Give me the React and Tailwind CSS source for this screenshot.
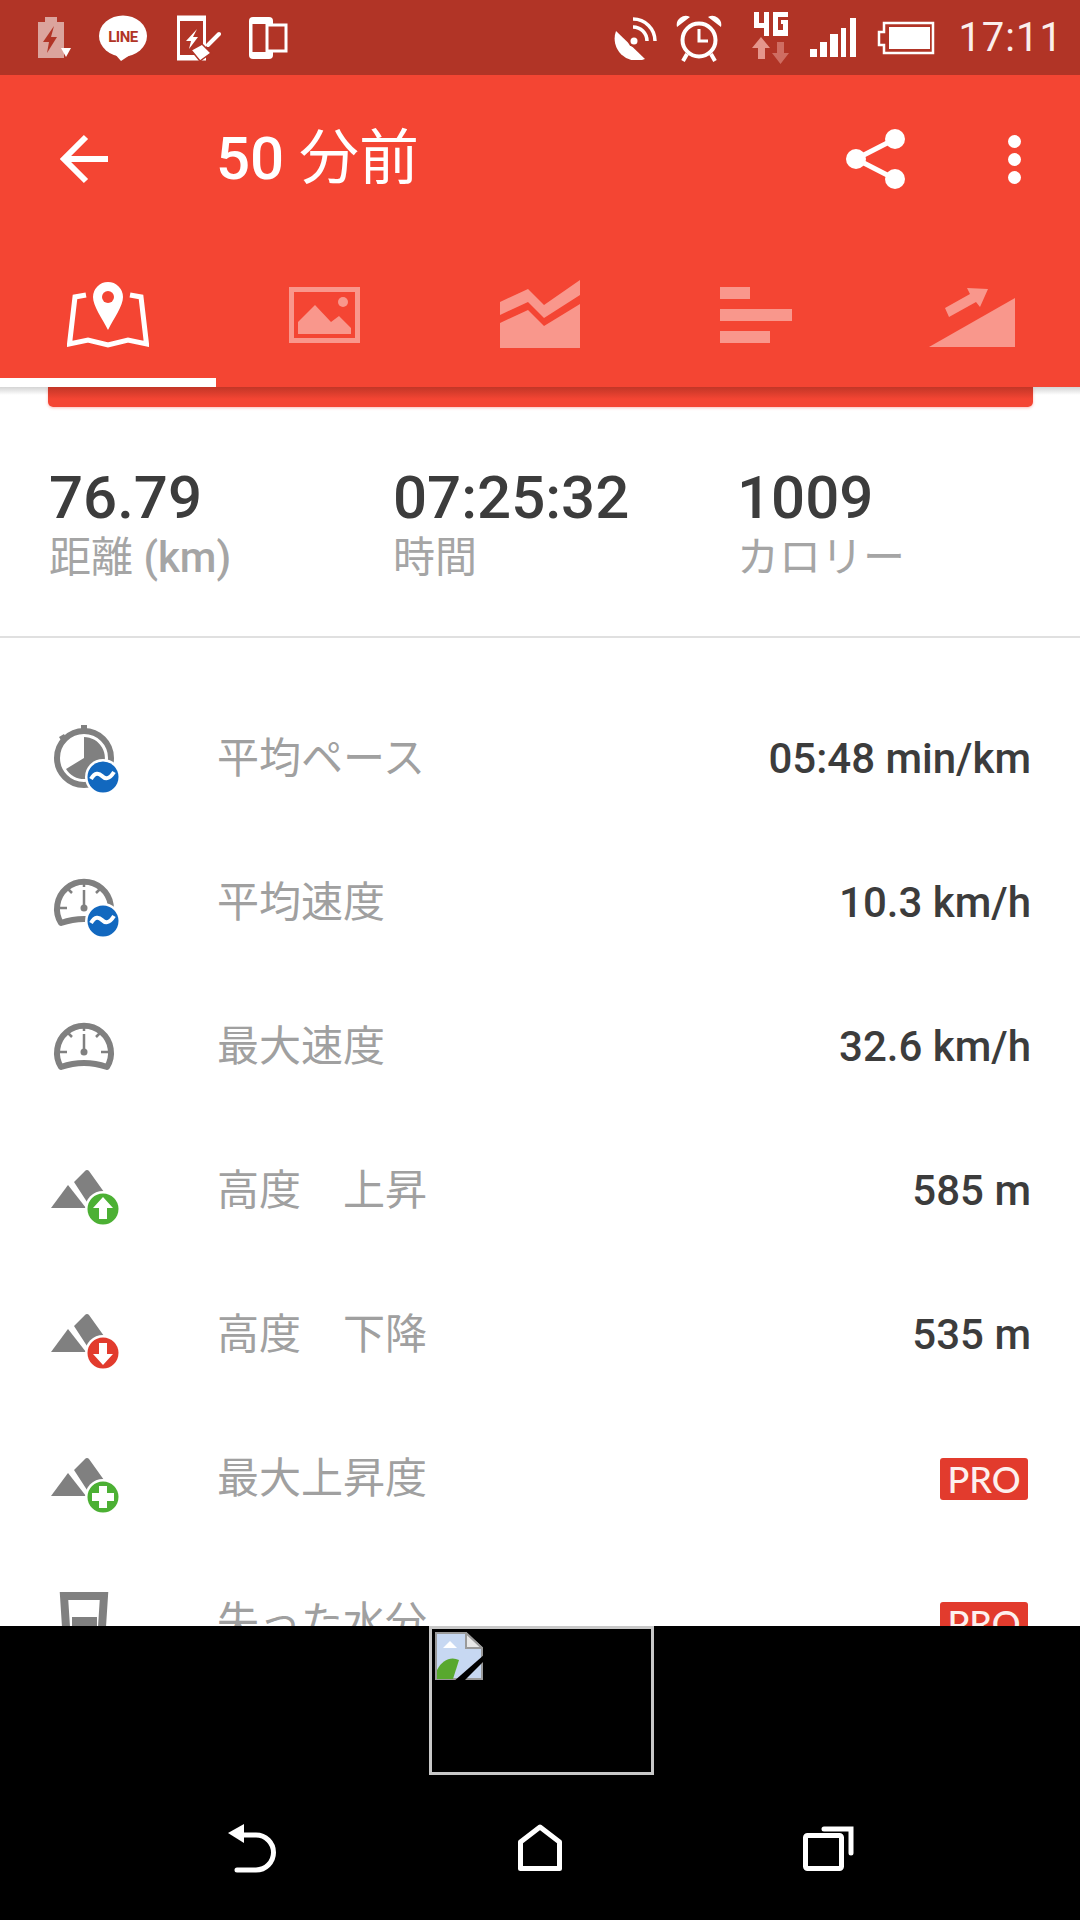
const CJK = "font-['Roboto','Noto_Sans_CJK_JP',sans-serif]";
const RED = "#b13426";

function Shape({ w, h, children, className = "" }) {
  return (
    <svg width={w} height={h} viewBox={`0 0 ${w} ${h}`} className={className}>
      {children}
    </svg>
  );
}

function StatusIcons() {
  return (
    <div className="flex h-[75px] shrink-0 items-center bg-[#b13426] pl-[37px] pr-[17px] text-white">
      <Shape w={36} h={42}>
        <path d="M1 5h7V0h12v5h7v36H1z" fill="#dba49d" />
        <path d="M17 9L6 25h6l-2 11 10-16h-6z" fill={RED} />
        <path d="M24 31h10l-5 9z" fill="#fff" />
      </Shape>
      <Shape w={50} h={46} className="ml-[25px]">
        <ellipse cx="25" cy="21" rx="24" ry="20.5" fill="#fff" />
        <path d="M16 38h19l-12 8z" fill="#fff" />
        <text x="25" y="26.5" textAnchor="middle" fontSize="15" fontWeight="700" letterSpacing="-0.5" fill={RED} fontFamily="Roboto">LINE</text>
      </Shape>
      <Shape w={44} h={46} className="ml-[29px]">
        <rect x="1.5" y="2" width="26" height="42" fill="none" stroke="#fff" strokeWidth="3" />
        <rect x="1" y="1" width="27" height="5" fill="#fff" />
        <rect x="1" y="40" width="27" height="5" fill="#fff" />
        <path d="M20 14L9 26h5l-2 8 9-12h-5z" fill="#fff" />
        <path d="M42 19L31 30" stroke="#fff" strokeWidth="4" strokeLinecap="round" />
        <path d="M25 29l9 9-11 8-9-11z" fill="#fff" stroke={RED} strokeWidth="1.5" />
      </Shape>
      <Shape w={40} h={44} className="ml-[27px]">
        <rect x="1" y="1" width="24" height="42" rx="4" fill="#fff" />
        <rect x="4.5" y="8" width="17" height="28" fill={RED} />
        <rect x="19" y="9" width="19" height="26" fill={RED} stroke="#fff" strokeWidth="3" />
      </Shape>
      <div className="flex-1" />
      <Shape w={44} h={44}>
        <path d="M3 15A22 22 0 0 0 32 43z" fill="#fff" />
        <circle cx="21" cy="25" r="6" fill={RED} />
        <circle cx="21" cy="25" r="3.5" fill="#fff" />
        <path d="M20 11a14 14 0 0 1 14 14M20 3a22 22 0 0 1 22 22" fill="none" stroke="#fff" strokeWidth="3.5" />
      </Shape>
      <Shape w={46} h={48} className="ml-[19px]">
        <circle cx="23" cy="26" r="16.5" fill="none" stroke="#fff" strokeWidth="4" />
        <path d="M23 15v12h9" fill="none" stroke="#fff" strokeWidth="3" />
        <path d="M1 13a9 9 0 0 1 13-10zM45 13a9 9 0 0 0-13-10z" fill="#fff" />
        <path d="M11 40l-4 7M35 40l4 7" stroke="#fff" strokeWidth="4" />
      </Shape>
      <Shape w={38} h={54} className="ml-[29px]">
        <path d="M3 1h5v11h5V1h5v24h-5V17H3zM22 1h15v5H27v13h5v-6h-2V9h7v16H22z" fill="#fff" />
        <path d="M10 26l9 11h-5v11H7V37H1z" fill="#e5968c" />
        <path d="M26 31h7v11h5l-8.5 11L21 42h5z" fill="#cf6d62" />
      </Shape>
      <Shape w={48} h={40} className="ml-[20px]">
        <path d="M1 31h7v8H1zM11 24h7v15h-7zM21 16h8v23h-8zM32 10h5v29h-5zM41 0h6v39h-6z" fill="#fff" />
      </Shape>
      <Shape w={58} h={34} className="ml-[20px]">
        <path d="M7 2h49v30H7v-8H2V11h5z" fill="none" stroke="#fff" strokeWidth="2.5" />
        <rect x="12" y="6" width="41" height="22" fill="#fff" />
      </Shape>
      <span className="ml-[23px] font-['Roboto'] text-[40px] leading-none tracking-[1px] text-[#fbeeec]">17:11</span>
    </div>
  );
}

function ToolBar() {
  return (
    <div className="flex h-[168px] shrink-0 items-center bg-[#f44533] text-white">
      <div className="flex w-[216px] pl-[59px]">
        <Shape w={50} h={50}>
          <path d="M49 25H5M27 3L5 25l22 22" fill="none" stroke="#fff" strokeWidth="6" />
        </Shape>
      </div>
      <span className={`${CJK} text-[60px] leading-none`}>
        <span className="font-medium">50</span> 分前
      </span>
      <div className="flex-1" />
      <Shape w={60} h={62}>
        <circle cx="49" cy="11" r="10" fill="#fff" />
        <circle cx="10" cy="31" r="10" fill="#fff" />
        <circle cx="49" cy="51" r="10" fill="#fff" />
        <path d="M49 11L10 31l39 20" fill="none" stroke="#fff" strokeWidth="5" />
      </Shape>
      <div className="ml-[102px] mr-[59px] flex flex-col gap-[5px]">
        <div className="h-[13px] w-[13px] rounded-full bg-white" />
        <div className="h-[13px] w-[13px] rounded-full bg-white" />
        <div className="h-[13px] w-[13px] rounded-full bg-white" />
      </div>
    </div>
  );
}

function Tabs() {
  const c = "#f9978c";
  return (
    <div className="relative z-10 grid h-[144px] shrink-0 grid-cols-5 bg-[#f44533]">
      <div className="relative flex justify-center pt-[39px]">
        <Shape w={82} h={68}>
          <path d="M41 0a15 15 0 0 1 15 15c0 9-9 21-15 33-6-12-15-24-15-33A15 15 0 0 1 41 0z" fill="#fff" />
          <circle cx="41" cy="15" r="6" fill="#f44533" />
          <path d="M19 13L8 15 2.5 62 21 58l20 5 20-5 18.5 4L74 15 63 13" fill="none" stroke="#fff" strokeWidth="5" />
        </Shape>
        <div className="absolute inset-x-0 bottom-0 h-[9px] bg-white" />
      </div>
      <div className="flex justify-center pt-[44px]">
        <Shape w={71} h={56}>
          <rect x="2.5" y="2.5" width="66" height="51" fill="none" stroke={c} strokeWidth="5" />
          <circle cx="54" cy="15" r="5" fill={c} />
          <path d="M9 47V35l17-17 16 17 8-6 12 12v6z" fill={c} />
        </Shape>
      </div>
      <div className="flex justify-center pt-[37px]">
        <Shape w={80} h={68}>
          <path d="M0 22L28 9l16 16L80 0v15L44 38 28 22 0 35z" fill={c} />
          <path d="M0 43l28-13 16 16 36-22v44H0z" fill={c} />
        </Shape>
      </div>
      <div className="flex justify-center pt-[44px]">
        <Shape w={72} h={56}>
          <path d="M0 0h30v12H0zM0 22h72v12H0zM0 44h50v12H0z" fill={c} />
        </Shape>
      </div>
      <div className="flex justify-center pt-[44px]">
        <Shape w={86} h={60}>
          <path d="M0 60L86 11v49z" fill={c} />
          <path d="M16 21L41 7 38 1l21 1-8 18-4-5-27 15z" fill={c} />
        </Shape>
      </div>
    </div>
  );
}

function Stats() {
  return (
    <div className="flex h-[231px] shrink-0 border-b-2 border-[#e0e0e0] bg-white pl-[49px] pt-[59px]">
      <div className="w-[344px]">
        <div className={`${CJK} text-[60px] font-medium leading-[64px] text-[#3c3c3c]`}>76.79</div>
        <div className={`${CJK} text-[42px] leading-[56px] text-[#a5a5a5]`}>
          距離 <span className="font-medium">(km)</span>
        </div>
      </div>
      <div className="w-[344px]">
        <div className={`${CJK} text-[60px] font-medium leading-[64px] text-[#3c3c3c]`}>07:25:32</div>
        <div className={`${CJK} text-[42px] leading-[56px] text-[#a5a5a5]`}>時間</div>
      </div>
      <div>
        <div className={`${CJK} text-[60px] font-medium leading-[64px] text-[#3c3c3c]`}>1009</div>
        <div className={`${CJK} text-[42px] leading-[56px] text-[#a5a5a5]`}>カロリー</div>
      </div>
    </div>
  );
}

function Badge({ color, kind }) {
  return (
    <svg width="36" height="36" viewBox="0 0 36 36" className="absolute left-[31px] top-[35px]">
      <circle cx="18" cy="18" r="18" fill="#fff" />
      <circle cx="18" cy="18" r="15.5" fill={color} />
      {kind === "wave" && <path d="M6 20c4-7 8-6 11-3s7 4 12-4" fill="none" stroke="#fff" strokeWidth="4" />}
      {kind === "up" && <path d="M18 6l10 11h-6v11h-8V17H8z" fill="#fff" />}
      {kind === "down" && <path d="M18 30L8 19h6V8h8v11h6z" fill="#fff" />}
      {kind === "plus" && <path d="M14 7h8v7h7v8h-7v7h-8v-7H7v-8h7z" fill="#fff" />}
    </svg>
  );
}

const GRAY = "#808080";

function IconBox({ children }) {
  return (
    <svg width="72" height="70" viewBox="0 0 72 70" className="absolute left-0 top-0 overflow-visible">
      {children}
    </svg>
  );
}

function Stopwatch() {
  return (
    <IconBox>
      <path d="M27 1h6v8h-6zM5 13l5-3 3 5-5 3z" fill={GRAY} />
      <circle cx="30" cy="34" r="27" fill="none" stroke={GRAY} strokeWidth="6" />
      <path d="M30 13A21 21 0 1 1 12 45l18-11z" fill={GRAY} />
    </IconBox>
  );
}

function Gauge() {
  return (
    <IconBox>
      <path d="M7 55A27 27 0 1 1 53 55Q30 47 7 55z" fill="none" stroke={GRAY} strokeWidth="6" strokeLinejoin="round" />
      <path d="M30 14v5M14 21l4 4M46 21l-4 4M6 40h7M47 40h7M30 22v17" stroke={GRAY} strokeWidth="2.5" />
      <circle cx="30" cy="40" r="3.5" fill={GRAY} />
    </IconBox>
  );
}

function Mountain() {
  return (
    <IconBox>
      <path d="M-3 52L14 29l18 23z" fill={GRAY} />
      <path d="M20 26L31 15c1-1.5 3-1.5 4 0L50 36 33 46z" fill={GRAY} />
    </IconBox>
  );
}

function Glass() {
  return (
    <IconBox>
      <path d="M10 8h40l-4 62H14z" fill="none" stroke={GRAY} strokeWidth="8" />
      <rect x="18" y="29" width="25" height="40" fill={GRAY} />
    </IconBox>
  );
}

function Row({ icon, badge, label, value, pro }) {
  return (
    <div className="flex h-[144px] items-center pl-[54px] pr-[49px]">
      <div className="w-[163px] shrink-0">
        <div className="relative h-[70px] w-[72px]">
          {icon}
          {badge}
        </div>
      </div>
      <span className={`${CJK} flex-1 text-[42px] leading-none text-[#a0a0a0]`}>{label}</span>
      {pro ? (
        <span className="mr-[3px] flex h-[42px] w-[88px] items-center justify-center rounded-[3px] bg-[#e23b2d] font-['Lato'] text-[36px] font-medium leading-none text-[#fdf0ee]">
          PRO
        </span>
      ) : (
        <span className="font-['Roboto'] text-[42px] font-medium leading-none text-[#3c3c3c]">{value}</span>
      )}
    </div>
  );
}

function Nav() {
  return (
    <div className="relative z-20 h-[294px] shrink-0 bg-black">
      <div className="absolute left-[429px] top-0 h-[149px] w-[225px] border-[3px] border-[#c8c8c8]">
        <svg width="48" height="48" viewBox="0 0 48 48" className="ml-[3px] mt-[3px]">
          <path d="M1 1h30l16 15v31H1z" fill="#c7d8f2" stroke="#9a9a9a" strokeWidth="2" />
          <path d="M31 1v15h16z" fill="#e8e8e8" stroke="#9a9a9a" strokeWidth="2" />
          <path d="M8 16l7-7 7 7z" fill="#fff" />
          <path d="M2 47V38c5-10 14-14 22-10l-6 19z" fill="#58a82e" />
          <path d="M18 50L50 22v6L28 50z" fill="#000" />
        </svg>
      </div>
      <div className="flex justify-center">
        <svg width="1080" height="80" viewBox="0 0 1080 80" className="mt-[192px]">
          <path d="M228 15l16-9v19z" fill="#fff" />
          <path d="M243 17h13a17.5 17.5 0 0 1 0 35h-19" fill="none" stroke="#fff" strokeWidth="5" strokeLinecap="round" />
          <path d="M520.5 50.5V24L540 9l19.500 15v26.500z" fill="none" stroke="#fff" strokeWidth="5" strokeLinejoin="round" />
          <rect x="805.5" y="17.500" width="36" height="33" rx="2" fill="none" stroke="#fff" strokeWidth="5" />
          <path d="M824 11h27v24" fill="none" stroke="#fff" strokeWidth="5" strokeLinecap="round" />
        </svg>
      </div>
    </div>
  );
}

export default function App() {
  const rows = [
    { icon: <Stopwatch />, badge: <Badge color="#1268bf" kind="wave" />, label: "平均ペース", value: "05:48 min/km" },
    { icon: <Gauge />, badge: <Badge color="#1268bf" kind="wave" />, label: "平均速度", value: "10.3 km/h" },
    { icon: <Gauge />, label: "最大速度", value: "32.6 km/h" },
    { icon: <Mountain />, badge: <Badge color="#4cb034" kind="up" />, label: "高度　上昇", value: "585 m" },
    { icon: <Mountain />, badge: <Badge color="#e23b2d" kind="down" />, label: "高度　下降", value: "535 m" },
    { icon: <Mountain />, badge: <Badge color="#4cb034" kind="plus" />, label: "最大上昇度", pro: true },
    { icon: <Glass />, label: "失った水分", pro: true },
  ];
  return (
    <div className="flex h-[1920px] w-[1080px] flex-col overflow-hidden bg-white">
      <StatusIcons />
      <ToolBar />
      <Tabs />
      <div className="relative flex h-[1239px] shrink-0 flex-col overflow-hidden">
        <div className="absolute inset-x-0 top-0 h-[8px] bg-gradient-to-b from-[#d4d4d4] to-white" />
        <div className="relative flex h-[20px] shrink-0 justify-center">
          <div className="h-[20px] w-[985px] rounded-b-[5px] bg-gradient-to-b from-[#c23627] to-[#f44533] to-60% shadow-[0_1px_3px_rgba(244,67,54,0.35)]" />
        </div>
        <Stats />
        <div className="shrink-0 pt-[49px]">
          {rows.map((r) => (
            <Row key={r.label} {...r} />
          ))}
        </div>
      </div>
      <Nav />
    </div>
  );
}
